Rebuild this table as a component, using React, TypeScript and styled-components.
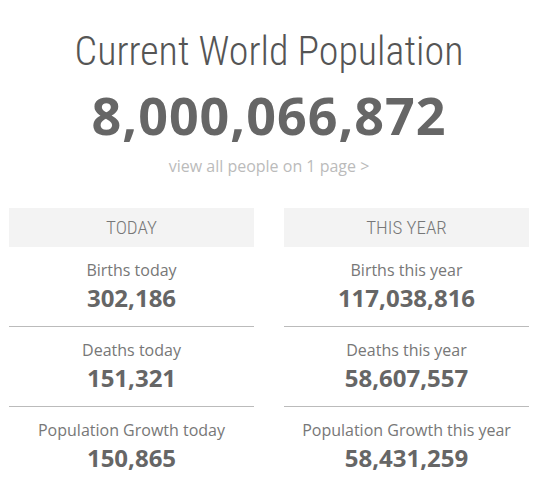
import React from 'react';
import styled, { createGlobalStyle } from 'styled-components';

const GlobalStyle = createGlobalStyle`
  body {
    margin: 0;
    background: #fff;
    font-family: 'Open Sans', 'Liberation Sans', sans-serif;
  }
`;

const Page = styled.div`
  width: 536px;
  padding: 0 7px 0 9px;
  box-sizing: border-box;
  text-align: center;
`;

const Title = styled.h1`
  margin: 0;
  padding-top: 28px;
  font-family: Roboto, 'Liberation Sans', sans-serif;
  font-weight: 300;
  font-stretch: condensed;
  font-size: 40px;
  line-height: 48px;
  color: #555;
`;

const Counter = styled.div`
  font-weight: 700;
  font-size: 52px;
  line-height: 60px;
  color: #666;
  letter-spacing: 1px;
  margin-top: 9px;
`;

const ViewLink = styled.a`
  display: block;
  margin-top: 10px;
  font-size: 16px;
  line-height: 22px;
  color: #bbb;
  text-decoration: none;
`;

const Columns = styled.div`
  display: grid;
  grid-template-columns: 245px 245px;
  column-gap: 30px;
  margin-top: 31px;
`;

const Column = styled.div`
  display: flex;
  flex-direction: column;
`;

const Header = styled.div`
  height: 39px;
  line-height: 39px;
  background: #f3f3f3;
  font-family: Roboto, 'Liberation Sans', sans-serif;
  font-weight: 300;
  font-stretch: condensed;
  font-size: 19px;
  color: #777;
`;

const Stat = styled.div<{ $last?: boolean }>`
  padding: 12px 0 11px;
  border-bottom: ${(p) => (p.$last ? 'none' : '1px solid #bbb')};
`;

const Label = styled.div`
  font-size: 16px;
  line-height: 22px;
  color: #777;
`;

const Value = styled.div`
  font-weight: 700;
  font-size: 24px;
  line-height: 34px;
  color: #666;
`;

const columns = [
  {
    title: 'TODAY',
    stats: [
      ['Births today', '302,186'],
      ['Deaths today', '151,321'],
      ['Population Growth today', '150,865'],
    ],
  },
  {
    title: 'THIS YEAR',
    stats: [
      ['Births this year', '117,038,816'],
      ['Deaths this year', '58,607,557'],
      ['Population Growth this year', '58,431,259'],
    ],
  },
];

export default function App() {
  return (
    <Page>
      <GlobalStyle />
      <Title>Current World Population</Title>
      <Counter>8,000,066,872</Counter>
      <ViewLink href="#">view all people on 1 page &gt;</ViewLink>
      <Columns>
        {columns.map((col) => (
          <Column key={col.title}>
            <Header>{col.title}</Header>
            {col.stats.map(([label, value], i) => (
              <Stat key={label} $last={i === col.stats.length - 1}>
                <Label>{label}</Label>
                <Value>{value}</Value>
              </Stat>
            ))}
          </Column>
        ))}
      </Columns>
    </Page>
  );
}
